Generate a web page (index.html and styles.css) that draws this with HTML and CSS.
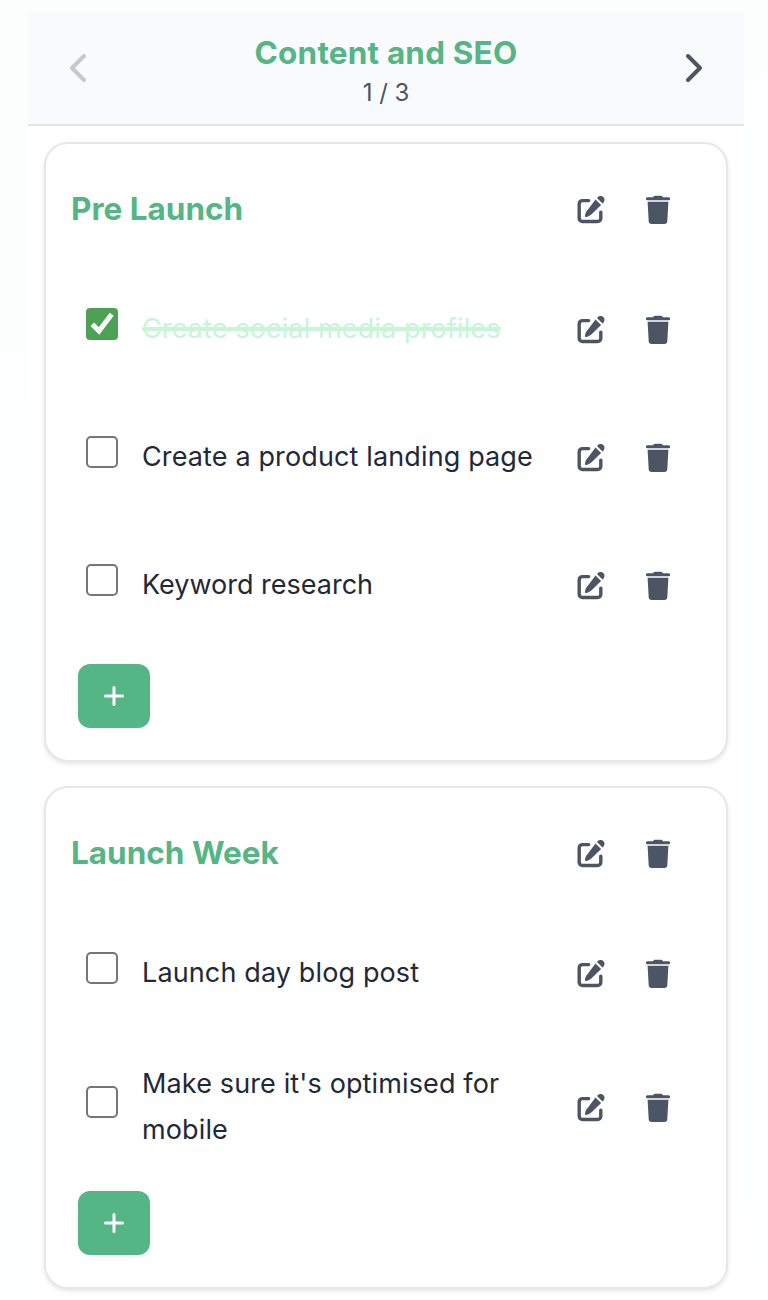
FILE: index.html
```
<!DOCTYPE html>
<html lang="en">
<head>
<meta charset="utf-8">
<title>Content and SEO</title>
<link rel="stylesheet" href="styles.css">
</head>
<body>
<svg class="sprite" aria-hidden="true">
  <symbol id="edit" viewBox="0 0 28 28">
    <path d="M11.700 4.600H5.400a3.200 3.200 0 0 0-3.200 3.200V22.300a3.200 3.200 0 0 0 3.200 3.200h15.200a3.200 3.200 0 0 0 3.200-3.200v-6.200" fill="none" stroke="currentColor" stroke-width="3.400" stroke-linecap="round"/>
    <path d="M18.500 3.500l5.600 5.500L14.600 18.200c-1.700 1.600-3.500 2.500-5.700 2.700-.7 0-1-.3-.9-1 .2-2.300 1-4.200 2.600-5.900zM20 2l.9-.9c1.600-1.500 3.800-1.500 5.400 0s1.600 3.800.2 5.400l-1 1z" fill="currentColor"/>
  </symbol>
  <symbol id="trash" viewBox="0 0 26 30">
    <path d="M8 2.200C8.700 1.200 9.500.8 10.500.8h5c1 0 1.800.4 2.500 1.400h5.600a1.500 1.500 0 0 1 0 3.100H2.400a1.500 1.500 0 0 1 0-3.100zM2.600 6.700h20.800l-1.100 19.500a2.900 2.900 0 0 1-2.900 2.700H6.600a2.900 2.900 0 0 1-2.900-2.700z" fill="currentColor"/>
  </symbol>
</svg>
<main class="board">
  <header class="pager">
    <button class="arrow disabled" aria-label="Previous"><svg width="20" height="32" viewBox="0 0 20 32"><path d="M16 4L4 16l12 12" /></svg></button>
    <div class="heading">
      <h1 class="board-title">Content and SEO</h1>
      <p class="count">1 / 3</p>
    </div>
    <button class="arrow" aria-label="Next"><svg width="20" height="32" viewBox="0 0 20 32"><path d="M4 4l12 12L4 28"/></svg></button>
  </header>
  <div class="cards">
    <section class="card">
      <div class="card-head">
        <h2 class="card-title">Pre Launch</h2>
        <div class="actions"><svg class="edit"><use href="#edit"/></svg><svg class="trash"><use href="#trash"/></svg></div>
      </div>
      <div class="task">
        <span class="box checked"><svg width="32" height="32" viewBox="0 0 32 32"><path d="M6.300 16.300l6.700 6.700L25.700 6.200"/></svg></span>
        <p class="label done">Create social media profiles</p>
        <div class="actions"><svg class="edit"><use href="#edit"/></svg><svg class="trash"><use href="#trash"/></svg></div>
      </div>
      <div class="task">
        <span class="box"></span>
        <p class="label">Create a product landing page</p>
        <div class="actions"><svg class="edit"><use href="#edit"/></svg><svg class="trash"><use href="#trash"/></svg></div>
      </div>
      <div class="task">
        <span class="box"></span>
        <p class="label tight">Keyword research</p>
        <div class="actions"><svg class="edit"><use href="#edit"/></svg><svg class="trash"><use href="#trash"/></svg></div>
      </div>
      <button class="add" aria-label="Add task"><svg width="20" height="20" viewBox="0 0 20 20"><path d="M10 1.500v17M1.500 10h17"/></svg></button>
    </section>
    <section class="card">
      <div class="card-head">
        <h2 class="card-title">Launch Week</h2>
        <div class="actions"><svg class="edit"><use href="#edit"/></svg><svg class="trash"><use href="#trash"/></svg></div>
      </div>
      <div class="task">
        <span class="box"></span>
        <p class="label">Launch day blog post</p>
        <div class="actions"><svg class="edit"><use href="#edit"/></svg><svg class="trash"><use href="#trash"/></svg></div>
      </div>
      <div class="task">
        <span class="box"></span>
        <p class="label">Make sure it's optimised for mobile</p>
        <div class="actions"><svg class="edit"><use href="#edit"/></svg><svg class="trash"><use href="#trash"/></svg></div>
      </div>
      <button class="add" aria-label="Add task"><svg width="20" height="20" viewBox="0 0 20 20"><path d="M10 1.500v17M1.500 10h17"/></svg></button>
    </section>
  </div>
</main>
</body>
</html>
```
FILE: styles.css
```
* { box-sizing: border-box; }
body {
  margin: 0;
  height: 1300px;
  overflow: hidden;
  padding: 12px 24px 0 28px;
  background: linear-gradient(160deg, #fbfefd, #fdfffe 70%, #fefefe);
  font-family: Inter, "Liberation Sans", sans-serif;
  color: #1f2937;
}
h1, h2, p { margin: 0; }
button { border: 0; padding: 0; background: none; }
svg { display: block; }
.sprite { position: absolute; width: 0; height: 0; }
.board { height: 1288px; background: #fff; }
.pager {
  display: flex;
  align-items: center;
  justify-content: space-between;
  height: 114px;
  padding: 0 40px;
  background: #f9fafc;
  border-bottom: 2px solid #e5e7eb;
}
.arrow { color: #4b5563; }
.arrow path { fill: none; stroke: currentColor; stroke-width: 4; stroke-linecap: round; stroke-linejoin: round; }
.arrow.disabled { color: #c6c8cd; }
.heading { padding-top: 10px; text-align: center; }
.board-title { font-size: 31.5px; line-height: 40px; font-weight: 700; color: #55b685; letter-spacing: 0.18px; }
.count { font-size: 24px; line-height: 40px; color: #4b5563; }
.cards { display: flex; flex-direction: column; gap: 24px; padding: 16px; }
.card {
  padding: 0 32px 32px;
  background: #fff;
  border: 2px solid #e5e7eb;
  border-radius: 24px;
  box-shadow: 0 2px 4px rgba(0, 0, 0, .1);
}
.card-head { display: flex; align-items: center; justify-content: space-between; height: 120px; padding: 10px 23px 0 0; }
.card-title { margin-left: -7px; font-size: 31.5px; line-height: 40px; font-weight: 700; color: #55b685; }
.actions { display: flex; align-items: center; gap: 40px; padding-top: 4px; color: #4b5563; }
.card-head .actions { padding-top: 1px; }
.edit { width: 28px; height: 28px; }
.trash { width: 26px; height: 30px; }
.task { display: flex; align-items: center; min-height: 128px; padding: 24px 23px 24px 8px; }
.box { flex: none; width: 32px; height: 32px; margin: 0 24px 8px 0; border: 2px solid #767676; border-radius: 5px; background: #fff; }
.box.checked { border: 0; border-radius: 4px; background: #4ca154; }
.box.checked path { fill: none; stroke: #fff; stroke-width: 5; }
.label { flex: 1; margin: 1px 0 -1px; font-size: 27px; line-height: 45.5px; letter-spacing: 0.13px; }
.label.tight { letter-spacing: 0; }
.done { color: #c6f6d5; text-decoration: line-through; text-decoration-thickness: 4px; }
.add { display: flex; align-items: center; justify-content: center; width: 72px; height: 64px; margin-top: 16px; border-radius: 12px; background: #55b685; }
.add path { stroke: #fff; stroke-width: 3; stroke-linecap: round; }
```
